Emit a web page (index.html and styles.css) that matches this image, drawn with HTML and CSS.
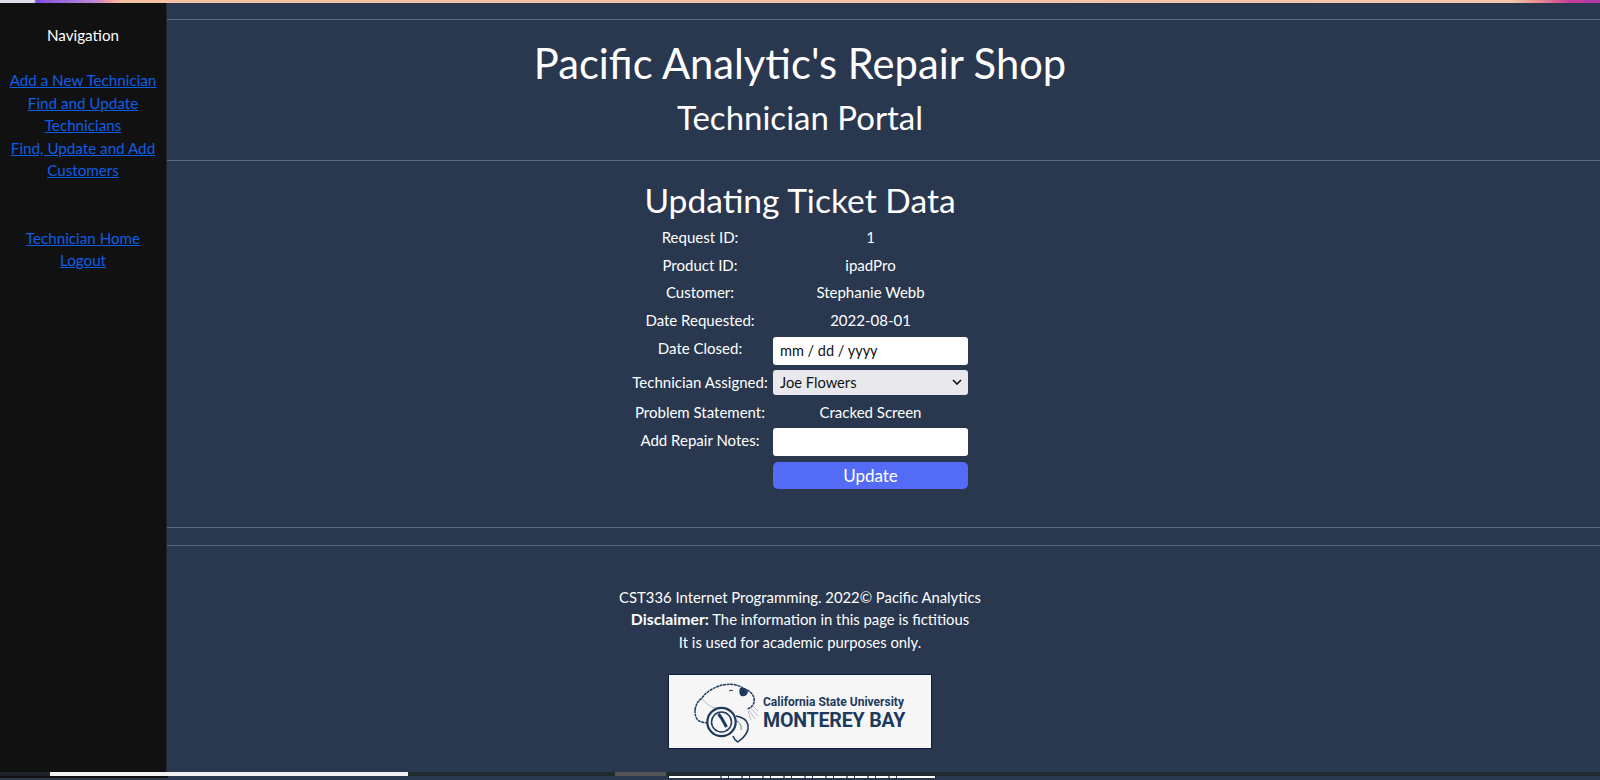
FILE: index.html
```html
<!DOCTYPE html>
<html lang="en">
<head>
<meta charset="utf-8">
<title>Updating Ticket Data</title>
<link rel="stylesheet" href="styles.css">
</head>
<body>
<div class="top-strip"></div>
<div class="app">
  <aside class="sidebar">
    <div class="nav-title">Navigation</div>
    <nav class="nav-group">
      <a href="#">Add a New Technician</a>
      <a href="#">Find and Update Technicians</a>
      <a href="#">Find, Update and Add Customers</a>
    </nav>
    <nav class="nav-group nav-group-low">
      <a href="#">Technician Home</a>
      <a href="#">Logout</a>
    </nav>
  </aside>
  <main class="main">
    <hr class="rule rule-first">
    <header class="head">
      <h1>Pacific Analytic's Repair Shop</h1>
      <h2>Technician Portal</h2>
    </header>
    <hr class="rule">
    <section class="content">
      <h3>Updating Ticket Data</h3>
      <form class="ticket">
        <div class="row"><span class="lbl">Request ID:</span><span class="val">1</span></div>
        <div class="row"><span class="lbl">Product ID:</span><span class="val">ipadPro</span></div>
        <div class="row"><span class="lbl">Customer:</span><span class="val">Stephanie Webb</span></div>
        <div class="row"><span class="lbl">Date Requested:</span><span class="val">2022-08-01</span></div>
        <div class="row row-date"><span class="lbl lbl-up">Date Closed:</span><div class="field date">mm / dd / yyyy</div></div>
        <div class="row row-select"><span class="lbl">Technician Assigned:</span>
          <div class="field select">Joe Flowers
            <svg class="chev" width="10" height="6" viewBox="0 0 10 6"><path d="M1 1l4 4 4-4" fill="none" stroke="#111" stroke-width="1.6"/></svg>
          </div>
        </div>
        <div class="row row-problem"><span class="lbl">Problem Statement:</span><span class="val">Cracked Screen</span></div>
        <div class="row row-input"><span class="lbl lbl-up">Add Repair Notes:</span><div class="field"></div></div>
        <div class="row row-btn"><span class="lbl"></span><button type="button" class="update">Update</button></div>
      </form>
    </section>
    <hr class="rule">
    <hr class="rule rule-b">
    <footer class="foot">
      <div>CST336 Internet Programming. 2022© Pacific Analytics</div>
      <div><b>Disclaimer:</b> The information in this page is fictitious</div>
      <div>It is used for academic purposes only.</div>
      <div class="logo">
        <svg class="otter" width="66" height="60" viewBox="0 0 66 60" fill="none" stroke="#1d3a5c">
          <path d="M2 27C3 21 5 18 9 15 12 10 18 6 26 3 35 0 44 1 50 5c5 2 10 5 11 10 1 5-1 9-7 11" stroke-width="1.5" stroke-dasharray="3 .6"/>
          <path d="M2 27c0 5 1 9 4 11 3 1 6 2 9 2" stroke-width="1.4" stroke-dasharray="3 .6"/>
          <path d="M9 15c3 5 8 9 14 10" stroke-width=".6" opacity=".5"/>
          <path d="M47 5c3-1 7 1 8 4-1 4-4 5-7 4-2-2-2-5-1-8z" fill="#1d3a5c" stroke="none"/>
          <path d="M36 8c1-1 3-1 4 0" stroke-width="1"/>
          <path d="M43 33c6 1 11 4 12 9 1 6-3 12-10 17-2-1-4-3-5-6" stroke-width="1.5"/>
          <path d="M42 37c5 2 7 6 6 10" stroke-width=".9" opacity=".7"/>
          <circle cx="28.5" cy="39" r="14.2" stroke-width="2.2"/>
          <circle cx="28.5" cy="39" r="10" stroke-width="1.5"/>
          <path d="M25.5 31l3 4 5 9" stroke-width="3"/>
          <path d="M59 22l6 6M58 25l7 8M56 27l6 9M55 28l3 9" stroke-width=".6" stroke="#8a97a8"/>
        </svg>
        <div class="logo-text">
          <span class="logo-top">California State University</span>
          <span class="logo-big">MONTEREY BAY</span>
        </div>
      </div>
    </footer>
  </main>
</div>
<div class="bottom-bar">
  <div class="tab tab-dark1"></div>
  <div class="tab tab-white"></div>
  <div class="tab tab-dark2"></div>
  <div class="tab tab-grey"></div>
</div>
<div class="side-foot"></div>
<div class="logo-peek"></div>
</body>
</html>
```

FILE: styles.css
```css
html, body { margin: 0; padding: 0; height: 780px; overflow: hidden; }
body {
  background: #29374f;
  font-family: "Lato", "Open Sans", sans-serif;
  color: #fff;
  position: relative;
}
.top-strip {
  height: 3px;
  background: linear-gradient(90deg, #e2deea 0, #e2deea 34px, #8050e0 36px, #c08ad8 95px, #f09aa0 108px, #f3c0a0 120px, #f6c8a8 1510px, #e88a90 1540px, #c83a98 1570px, #a83cb0 1600px);
}
.app { display: flex; height: 769px; }
.sidebar {
  width: 167px;
  flex: none;
  background: #111;
  border-right: 1px solid #21272f;
  box-sizing: border-box;
  text-align: center;
  font-size: 15.2px;
  line-height: 22.5px;
  padding: 21px 8px 0;
}
.nav-title { margin-bottom: 22.5px; }
.nav-group a { display: block; color: #0f5ee6; text-decoration: underline; }
.nav-group-low { margin-top: 45px; }
.main { flex: 1; min-width: 0; }
.rule { border: 0; border-top: 1px solid #5c6a80; margin: 0; }
.rule-first { margin-top: 16px; }
.head { text-align: center; padding: 14px 167px 0 0; height: 140px; box-sizing: border-box; }
h1 { font-size: 41.7px; font-weight: 400; line-height: 58px; margin: 0; }
h2 { font-size: 33px; font-weight: 400; line-height: 40px; margin: 5px 0 0; }
.content { height: 366px; box-sizing: border-box; padding: 19px 167px 0 0; text-align: center; }
h3 { font-size: 33.6px; font-weight: 400; line-height: 40px; margin: 0 0 3px; }
.ticket { display: flex; flex-direction: column; align-items: center; font-size: 15px; }
.row { display: flex; width: 342px; height: 27.75px; flex: none; align-items: center; line-height: 20px; white-space: nowrap; }
.lbl { width: 142px; flex: none; text-align: center; }
.lbl-up { position: relative; top: -2px; }
.val { width: 195px; margin-left: 2px; text-align: center; }
.row-date { height: 32px; }
.row-input { height: 33px; }
.row-select { height: 32px; }
.row-problem { height: 27px; }
.row-btn { height: 35px; }
.field {
  width: 195px; height: 28px; margin-left: 2px; background: #fff; border-radius: 3px;
  color: #111; text-align: left; box-sizing: border-box; padding-left: 7px; line-height: 28px;
}
.date { font-size: 14.5px; margin-top: 2px; }
.select {
  height: 25px; line-height: 25px; background: #e9e9ed; font-size: 14.7px;
  display: flex; justify-content: space-between; align-items: center; padding-right: 6px;
}
.update {
  width: 195px; height: 27px; margin-left: 2px; border: 0; border-radius: 5px;
  background: #546cf5; color: #fff; font: inherit; font-size: 17px; padding: 0;
}
.rule-b { margin-top: 17px; }
.foot { text-align: center; padding: 40px 167px 0 0; font-size: 14.85px; line-height: 22.4px; }
.foot b { font-size: 15.8px; }
.logo {
  width: 264px; height: 75px; margin: 21px auto 0; background: #f6f6f7; border: 1px solid #0d1d45;
  box-sizing: border-box; display: flex; align-items: center; gap: 4px; padding-left: 24px; color: #1d3a5c;
}
.otter { margin-top: 2px; }
.logo-text { display: flex; flex-direction: column; text-align: left; font-family: "Roboto", sans-serif; font-weight: 700; margin-top: 2px; }
.logo-top { font-size: 12px; line-height: 15px; }
.logo-big { font-size: 19.6px; line-height: 21px; letter-spacing: -.2px; }
.bottom-bar {
  position: absolute; left: 0; top: 772px; width: 100%; height: 4px; background: #1e2a2e; display: flex;
}
.tab-dark1 { width: 50px; background: #1e2226; }
.tab-white { width: 358px; background: #f1f1f1; }
.tab-dark2 { width: 207px; background: #1e2a2e; }
.tab-grey { width: 51px; background: #555; }
.side-foot { position: absolute; left: 0; top: 776px; width: 168px; height: 2px; background: #111; }
.logo-peek {
  position: absolute; left: 668px; top: 776px; width: 268px; height: 2px;
  background: repeating-linear-gradient(90deg, #fff 0 12px, #6c7f98 12px 14px, #fff 14px 20px, #1d3a5c 20px 21px) 39px 0 / 200px 100% no-repeat, #fff;
  border-left: 1px solid #0d1d45; border-right: 1px solid #0d1d45; box-sizing: border-box;
}
```
